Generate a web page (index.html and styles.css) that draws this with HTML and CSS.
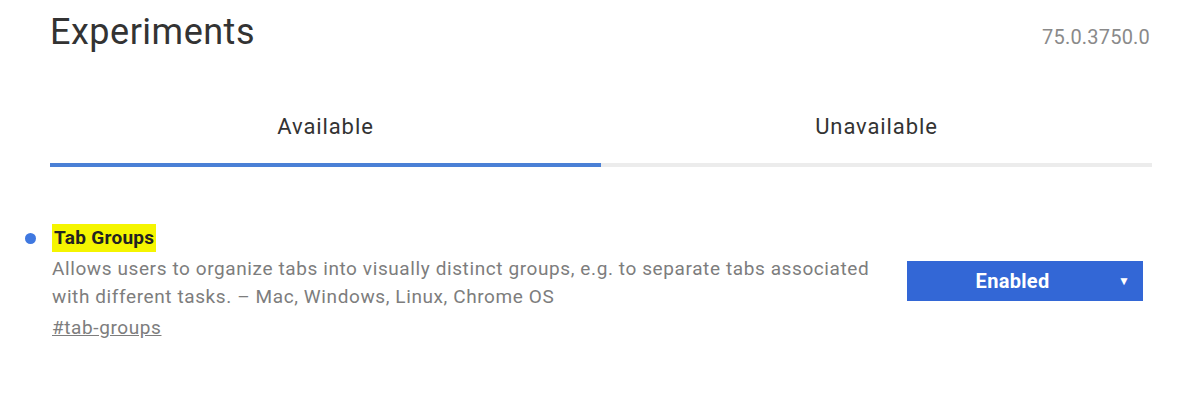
FILE: index.html
```html
<!DOCTYPE html>
<html lang="en">
<head>
<meta charset="utf-8">
<title>Experiments</title>
<link rel="stylesheet" href="styles.css">
</head>
<body>
<div class="page">
  <header class="header">
    <h1 class="title">Experiments</h1>
    <span class="version">75.0.3750.0</span>
  </header>
  <nav class="tabs">
    <div class="tab tab-active">Available</div>
    <div class="tab">Unavailable</div>
  </nav>
  <section class="experiment">
    <span class="dot"></span>
    <div class="exp-body">
      <h2 class="exp-name"><mark class="hl">Tab Groups</mark></h2>
      <p class="exp-desc">Allows users to organize tabs into visually distinct groups, e.g. to separate tabs associated with different tasks. – Mac, Windows, Linux, Chrome OS</p>
      <a class="exp-link" href="#tab-groups">#tab-groups</a>
    </div>
    <div class="select">
      <span class="select-label">Enabled</span>
      <span class="select-arrow">▼</span>
    </div>
  </section>
</div>
</body>
</html>
```

FILE: styles.css
```css
* { box-sizing: border-box; }
html, body { margin: 0; padding: 0; background: #fff; }
body { font-family: Roboto, "Noto Sans", Arial, sans-serif; color: #333; }

.page {
  width: 1194px;
  height: 405px;
  padding: 0 42px 0 50px;
  overflow: hidden;
}

.header {
  display: flex;
  justify-content: space-between;
  align-items: baseline;
  padding-top: 8px;
}
.title {
  margin: 0;
  font-size: 36px;
  font-weight: 400;
  line-height: 48px;
  color: #333;
  letter-spacing: 0.5px;
}
.version {
  font-size: 20px;
  color: #8a8a8a;
  padding-right: 2px;
  letter-spacing: 0.2px;
}

.tabs {
  display: grid;
  grid-template-columns: 1fr 1fr;
  margin-top: 57px;
  border-bottom: 4px solid #ececec;
}
.tab {
  text-align: center;
  font-size: 22px;
  line-height: 28px;
  letter-spacing: 0.9px;
  color: #333;
  padding-bottom: 22px;
  margin-bottom: -4px;
  border-bottom: 4px solid transparent;
}
.tab-active { border-bottom-color: #4a80d6; }

.experiment {
  display: flex;
  align-items: center;
  margin-left: -25px;
  margin-top: 58px;
}
.dot {
  align-self: flex-start;
  flex: none;
  width: 11px;
  height: 11px;
  border-radius: 50%;
  background: #3f78e0;
  margin-top: 8px;
  margin-right: 16px;
}
.exp-body { flex: 1; }
.exp-name {
  margin: 0;
  font-size: 19px;
  font-weight: 700;
  line-height: 25px;
  letter-spacing: 0.3px;
}
.hl {
  background: #f5f500;
  color: #222;
  padding: 2px 2px 3px;
}
.exp-desc {
  margin: 5px 0 0;
  font-size: 19px;
  line-height: 28px;
  letter-spacing: 0.6px;
  color: #7d7d7d;
  max-width: 830px;
}
.exp-link {
  display: inline-block;
  margin-top: 3px;
  font-size: 19px;
  line-height: 28px;
  letter-spacing: 0.6px;
  color: #7d7d7d;
  text-decoration: underline;
}

.select {
  flex: none;
  width: 236px;
  height: 40px;
  margin-right: 9px;
  margin-bottom: 6px;
  background: #3367d6;
  color: #fff;
  display: flex;
  align-items: center;
  padding: 0 13px 0 0;
}
.select-label {
  flex: 1;
  text-align: center;
  font-size: 20px;
  font-weight: 700;
  letter-spacing: 0.3px;
}
.select-arrow {
  font-size: 12px;
  line-height: 1;
}
```
